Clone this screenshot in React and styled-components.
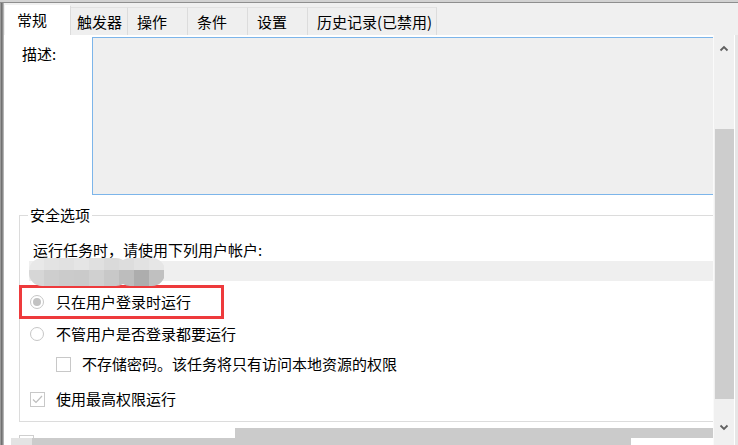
import React from 'react'
import styled, { createGlobalStyle } from 'styled-components'

const GlobalStyle = createGlobalStyle`
html, body { margin: 0; padding: 0; background: #fff; }
body { font-family: "Noto Sans CJK SC", "Noto Sans", sans-serif; color: #000; }
`

const Window = styled.div`
width: 738px;
height: 445px;
overflow: hidden;
display: flex;
flex-direction: column;
background: #f0f0f0;
`
const TopEdge = styled.div`
height: 3px;
flex: none;
background: linear-gradient(#d2d2d2 0 2px, #8e8e8e 2px);
`
const Body = styled.div`
flex: 1;
min-height: 0;
display: flex;
`
const LeftEdge = styled.div`
width: 4px;
flex: none;
background: linear-gradient(90deg, #9a9a9a 0 1px, #717171 1px 2px, #8a8a8a 2px 3px, #b4b4b4 3px);
`
const Main = styled.div`
flex: 1;
min-width: 0;
display: flex;
flex-direction: column;
`
const TabStrip = styled.div`
height: 32px;
flex: none;
display: flex;
align-items: flex-end;
padding-left: 1px;
background: #f0f0f0;
`
const Tab = styled.div`
box-sizing: border-box;
width: ${p => p.$w}px;
height: ${p => (p.$active ? 30 : 28)}px;
padding-left: ${p => p.$pad}px;
padding-bottom: ${p => (p.$active ? 2 : 0)}px;
background: ${p => (p.$active ? '#fff' : '#efefef')};
border-top: 1px solid ${p => (p.$active ? '#fff' : '#e2e2e2')};
border-right: 1px solid #dcdcdc;
font-size: 15px;
line-height: 27px;
white-space: nowrap;
`
const Content = styled.div`
flex: 1;
min-height: 0;
display: flex;
background: #fff;
`
const Pane = styled.div`
flex: 1;
min-width: 0;
overflow: hidden;
display: flex;
flex-direction: column;
font-size: 15px;
line-height: 20px;
`
const DescRow = styled.div`
display: flex;
height: 158px;
margin-top: 2px;
flex: none;
`
const DescLabel = styled.div`
width: 70px;
margin-left: 18px;
padding-top: 7px;
flex: none;
`
const TextBox = styled.div`
flex: 1;
background: #efefef;
border: 1px solid #7cb5ea;
border-right: none;
`
const Group = styled.fieldset`
margin: 10px 0 0 15px;
padding: 0 0 7px 0;
border: 1px solid #dcdcdc;
border-right: none;
min-width: 0;
display: flex;
flex-direction: column;
`
const Legend = styled.legend`
margin-left: 8px;
padding: 0 2px;
line-height: 20px;
`
const AccountText = styled.div`
margin-top: 15px;
padding-left: 13px;
`
const UserBar = styled.div`
position: relative;
height: 20px;
margin: 1px 0 0 9px;
background: #efefef;
`
const Blur = styled.svg`
position: absolute;
left: 0;
top: -3px;
`
const Highlight = styled.div`
box-sizing: border-box;
width: 205px;
height: 34px;
margin: 4px 0 0 -1px;
padding-left: 8px;
border: 3px solid #ee3a3c;
display: flex;
align-items: center;
`
const OptionRow = styled.div`
height: 30px;
margin-top: ${p => p.$top || 0}px;
padding-left: ${p => p.$indent}px;
display: flex;
align-items: center;
`
const Radio = styled.span`
box-sizing: border-box;
width: 14px;
height: 14px;
border-radius: 50%;
border: 1px solid #c6c6c6;
background: #fff;
display: flex;
align-items: center;
justify-content: center;
flex: none;
margin-right: 12px;
&::after {
  content: '';
  width: 8px;
  height: 8px;
  border-radius: 50%;
  background: ${p => (p.$checked ? '#c2c2c2' : 'transparent')};
}
`
const Box = styled.span`
box-sizing: border-box;
width: 15px;
height: 15px;
border: 1px solid #c8c8c8;
background: #fff;
flex: none;
margin-right: 11px;
display: flex;
align-items: center;
justify-content: center;
`
const Footer = styled.div`
margin-top: 6px;
display: flex;
flex-direction: column;
`
const FooterTop = styled.div`
height: 10px;
display: flex;
`
const MiniBox = styled.div`
box-sizing: border-box;
width: 15px;
height: 3px;
align-self: flex-end;
margin-left: 15px;
border: 1px solid #cfcfcf;
border-bottom: none;
`
const GrayBar = styled.div`
flex: 1;
margin-left: 201px;
background: #cbcbcb;
`
const FooterBottom = styled.div`
height: 7px;
width: 620px;
margin-left: 7px;
background: linear-gradient(90deg, #e3e3e3 0 21px, #cbcbcb 21px);
`
const Scrollbar = styled.div`
width: 20px;
flex: none;
border-left: 1px solid #fafafa;
background: #f0f0f0;
display: flex;
flex-direction: column;
align-items: center;
`
const Arrow = styled.div`
height: 26px;
width: 100%;
display: flex;
align-items: center;
justify-content: center;
margin-top: ${p => p.$top || 0}px;
`
const Thumb = styled.div`
width: 19px;
height: 270px;
margin-top: ${p => p.$top}px;
background: #cdcdcd;
`
const RightEdge = styled.div`
width: 3px;
flex: none;
border-left: 1px solid #fff;
background: #e6e6e6;
`

const Chevron = ({ down }) => (
  <svg width="10" height="7" viewBox="0 0 10 7">
    <path d={down ? 'M1.5 1.5 L5 5 L8.5 1.5' : 'M1.5 5.5 L5 2 L8.5 5.5'} fill="none" stroke="#606060" strokeWidth="1.8" />
  </svg>
)

const Check = () => (
  <svg width="11" height="9" viewBox="0 0 11 9">
    <path d="M1 4.5 L4 7.5 L10 1" fill="none" stroke="#bdbdbd" strokeWidth="1.2" />
  </svg>
)

const blobTop = ['#e8e8e8', '#e3e3e3', '#e1e1e1', '#e5e5e5', '#e0e0e0', '#dadada', '#dddddd', '#e2e2e2', '#e6e6e6']
const blobBottom = ['#d6d6d6', '#cecece', '#cbcbcb', '#cacaca', '#d0d0d0', '#c8c8c8', '#bdbdbd', '#adadad', '#c0c0c0']

const UserBlur = () => (
  <Blur width="136" height="28" viewBox="0 0 136 28">
    <defs>
      <clipPath id="blob">
        <rect x="0" y="0" width="100" height="28" rx="13" />
        <rect x="88" y="0" width="48" height="28" rx="13" />
      </clipPath>
    </defs>
    <g clipPath="url(#blob)">
      {blobTop.map((c, i) => <rect key={'t' + i} x={i * 15} y="0" width="15" height="12" fill={c} />)}
      {blobBottom.map((c, i) => <rect key={'b' + i} x={i * 15} y="12" width="15" height="16" fill={c} />)}
    </g>
  </Blur>
)

const tabs = [
  { label: '常规', w: 66, pad: 12, active: true },
  { label: '触发器', w: 57, pad: 6 },
  { label: '操作', w: 60, pad: 9 },
  { label: '条件', w: 60, pad: 9 },
  { label: '设置', w: 60, pad: 9 },
  { label: '历史记录(已禁用)', w: 129, pad: 9 },
]

export default function App() {
  return (
    <>
      <GlobalStyle />
      <Window>
        <TopEdge />
        <Body>
          <LeftEdge />
          <Main>
            <TabStrip>
              {tabs.map(t => (
                <Tab key={t.label} $w={t.w} $pad={t.pad} $active={t.active}>{t.label}</Tab>
              ))}
            </TabStrip>
            <Content>
              <Pane>
                <DescRow>
                  <DescLabel>描述:</DescLabel>
                  <TextBox />
                </DescRow>
                <Group>
                  <Legend>安全选项</Legend>
                  <AccountText>运行任务时，请使用下列用户帐户:</AccountText>
                  <UserBar>
                    <UserBlur />
                  </UserBar>
                  <Highlight>
                    <Radio $checked />
                    <span>只在用户登录时运行</span>
                  </Highlight>
                  <OptionRow $indent={10}>
                    <Radio />
                    <span>不管用户是否登录都要运行</span>
                  </OptionRow>
                  <OptionRow $indent={36}>
                    <Box />
                    <span>不存储密码。该任务将只有访问本地资源的权限</span>
                  </OptionRow>
                  <OptionRow $indent={10} $top={5}>
                    <Box><Check /></Box>
                    <span>使用最高权限运行</span>
                  </OptionRow>
                </Group>
                <Footer>
                  <FooterTop>
                    <MiniBox />
                    <GrayBar />
                  </FooterTop>
                  <FooterBottom />
                </Footer>
              </Pane>
              <Scrollbar>
                <Arrow><Chevron /></Arrow>
                <Thumb $top={68} />
                <Arrow $top={15}><Chevron down /></Arrow>
              </Scrollbar>
              <RightEdge />
            </Content>
          </Main>
        </Body>
      </Window>
    </>
  )
}
